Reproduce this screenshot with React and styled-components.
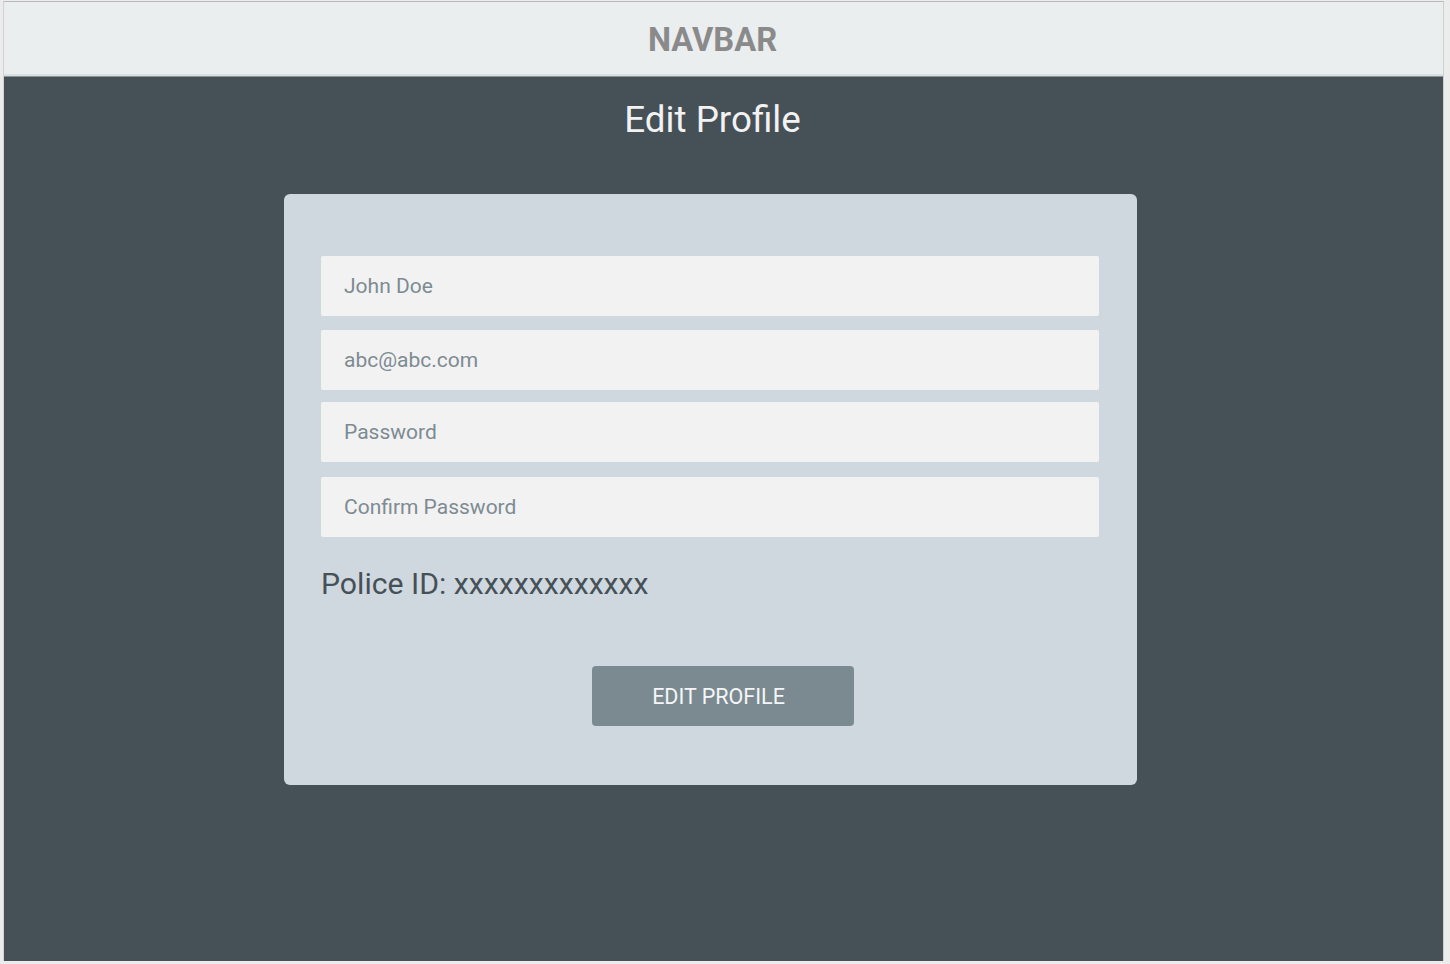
import React from 'react';
import styled, { createGlobalStyle } from 'styled-components';

const GlobalStyle = createGlobalStyle`
  * {
    box-sizing: border-box;
  }

  body {
    margin: 0;
    background: #ececec;
    font-family: Roboto, "Liberation Sans", Arial, sans-serif;
  }
`;

const Frame = styled.div`
  margin: 1px 6px 3px 3px;
  height: 960px;
  display: flex;
  flex-direction: column;
  border-top: 1px solid #b9b9b9;
  border-left: 1px solid #d2d2d2;
  border-right: 1px solid #cfcfcf;
`;

const Navbar = styled.nav`
  height: 74px;
  flex-shrink: 0;
  display: flex;
  align-items: center;
  justify-content: center;
  padding: 3px 22px 0 0;
  background: #eaeeef;
  border-bottom: 2px solid #dcdfe0;
`;

const Brand = styled.div`
  color: #8a8a8a;
  font-size: 32.7px;
  font-weight: 700;
`;

const Main = styled.main`
  flex: 1;
  display: flex;
  flex-direction: column;
  align-items: center;
  padding: 21px 26px 0 0;
  background: #455157;
  border-top: 1px solid #8b9194;
`;

const Title = styled.h1`
  margin: 0 0 52px 4px;
  color: #f2f2f2;
  font-size: 36.8px;
  line-height: 44px;
  font-weight: 400;
`;

const Card = styled.form`
  width: 853px;
  display: flex;
  flex-direction: column;
  padding: 62px 38px 59px 37px;
  background: #d0d8df;
  border-radius: 6px;
`;

const Field = styled.input`
  height: 60px;
  width: 100%;
  margin-top: ${(p) => p.$gap || 0}px;
  padding: 0 23px;
  border: none;
  outline: none;
  border-radius: 2px;
  background: #f2f2f2;
  color: #455157;
  font-family: inherit;
  font-size: 21px;

  &::placeholder {
    color: #7d8b92;
  }
`;

const PoliceId = styled.div`
  margin-top: 29px;
  color: #455157;
  font-size: 30.2px;
  line-height: 36px;
`;

const ButtonRow = styled.div`
  display: flex;
  justify-content: center;
  margin-top: 64px;
  padding-left: 25px;
`;

const SubmitButton = styled.button`
  width: 262px;
  height: 60px;
  padding-right: 14px;
  border: none;
  border-radius: 4px;
  background: #7b8a90;
  color: #f4f6f7;
  font-family: inherit;
  font-size: 21.5px;
  text-transform: uppercase;
  cursor: pointer;
`;

const fields = [
  { placeholder: 'John Doe', type: 'text', gap: 0 },
  { placeholder: 'abc@abc.com', type: 'email', gap: 14 },
  { placeholder: 'Password', type: 'password', gap: 12 },
  { placeholder: 'Confirm Password', type: 'password', gap: 15 },
];

const App = () => (
  <>
    <GlobalStyle />
    <Frame>
      <Navbar>
        <Brand>NAVBAR</Brand>
      </Navbar>
      <Main>
        <Title>Edit Profile</Title>
        <Card onSubmit={(e) => e.preventDefault()}>
          {fields.map((f) => (
            <Field key={f.placeholder} type={f.type} placeholder={f.placeholder} $gap={f.gap} />
          ))}
          <PoliceId>Police ID: xxxxxxxxxxxxx</PoliceId>
          <ButtonRow>
            <SubmitButton type="submit">Edit Profile</SubmitButton>
          </ButtonRow>
        </Card>
      </Main>
    </Frame>
  </>
);

export default App;
